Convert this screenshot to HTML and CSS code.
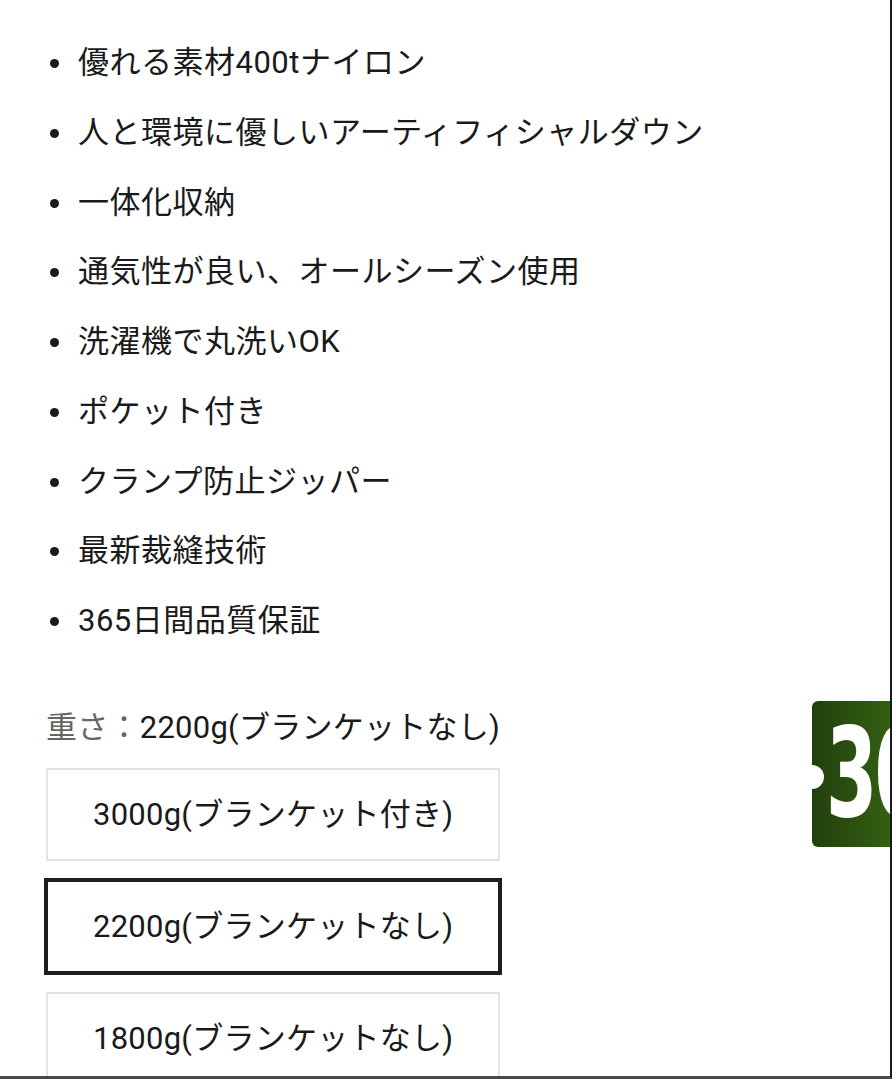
FILE: index.html
```html
<!DOCTYPE html>
<html lang="ja">
<head>
<meta charset="utf-8">
<link rel="stylesheet" href="styles.css">
</head>
<body>
<div class="page">
  <div class="content">
    <ul class="features">
      <li>優れる素材400tナイロン</li>
      <li>人と環境に優しいアーティフィシャルダウン</li>
      <li>一体化収納</li>
      <li>通気性が良い、オールシーズン使用</li>
      <li>洗濯機で丸洗いOK</li>
      <li>ポケット付き</li>
      <li>クランプ防止ジッパー</li>
      <li>最新裁縫技術</li>
      <li>365日間品質保証</li>
    </ul>
    <div class="option-label"><span class="label-name">重さ：</span><span class="label-value">2200g(ブランケットなし)</span></div>
    <div class="options">
      <div class="option">3000g(ブランケット付き)</div>
      <div class="option selected">2200g(ブランケットなし)</div>
      <div class="option">1800g(ブランケットなし)</div>
    </div>
  </div>
  <div class="badge"><span class="badge-dot"></span><span class="badge-text">30</span></div>
</div>
</body>
</html>
```
FILE: styles.css
```css
html, body {
  margin: 0;
  padding: 0;
  background: #ffffff;
}
body {
  font-family: Roboto, "Noto Sans CJK JP", sans-serif;
  color: #1a1a1a;
}
.page {
  position: relative;
  width: 890px;
  height: 1076px;
  border-right: 2px solid #1a1a1a;
  border-bottom: 3px solid #4a4a4a;
  overflow: hidden;
}
.content {
  padding-left: 46px;
  padding-top: 40px;
}
.features {
  margin: 0;
  padding: 0 0 0 32px;
  list-style: none;
}
.features li {
  position: relative;
  font-size: 31px;
  letter-spacing: 0.5px;
  line-height: 45px;
  margin-bottom: 24.75px;
}
.features li::before {
  content: "";
  position: absolute;
  left: -28px;
  top: 19px;
  width: 9px;
  height: 9px;
  border-radius: 50%;
  background: #1a1a1a;
}
.option-label {
  margin-top: 63px;
  font-size: 31px;
  letter-spacing: 0.25px;
  line-height: 44px;
}
.label-name {
  color: #666666;
}
.label-value {
  color: #1a1a1a;
}
.options {
  margin-top: 18px;
  display: flex;
  flex-direction: column;
  align-items: flex-start;
  gap: 19px;
}
.option {
  border: 2px solid #e3e3e3;
  padding: 0 45px;
  height: 89px;
  line-height: 89px;
  font-size: 31px;
  letter-spacing: 0.25px;
  color: #1a1a1a;
}
.option.selected {
  border: 4px solid #1e1e1e;
  margin: -2px;
}
.badge {
  position: absolute;
  left: 812px;
  top: 701px;
  width: 120px;
  height: 146px;
  border-radius: 6px;
  background: linear-gradient(90deg, #22400d 0%, #2f5811 50%, #3f7414 100%);
  overflow: hidden;
}
.badge-dot {
  position: absolute;
  left: -12px;
  top: 64px;
  width: 24px;
  height: 24px;
  border-radius: 50%;
  background: #ffffff;
}
.badge-text {
  position: absolute;
  left: 14px;
  top: 4px;
  font-family: "DejaVu Sans Condensed", "Liberation Sans Narrow", sans-serif;
  font-weight: bold;
  font-size: 124px;
  line-height: 136px;
  color: #ffffff;
  letter-spacing: -4px;
  transform: scaleX(0.66);
  transform-origin: left center;
}
```
